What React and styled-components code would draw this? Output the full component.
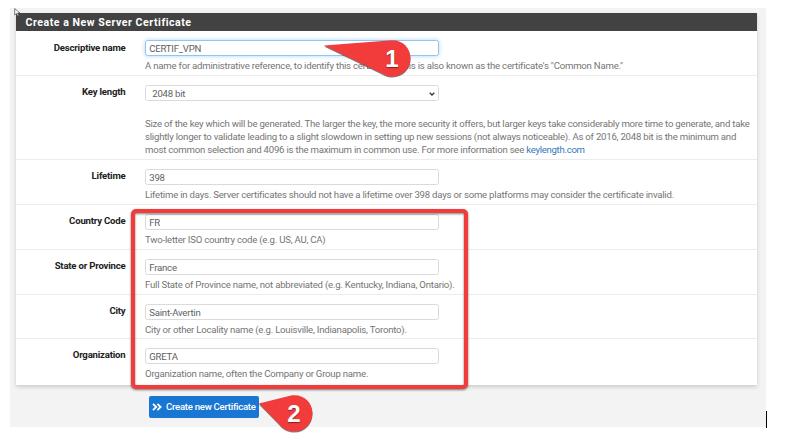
import React from "react";
import styled, { createGlobalStyle } from "styled-components";

const GlobalStyle = createGlobalStyle`
  * { box-sizing: border-box; }
  body {
    margin: 0;
    background: #fff;
    font-family: Roboto, "Liberation Sans", sans-serif;
    font-size: 9.6px;
    color: #757575;
  }
`;

const Screen = styled.main`
  position: relative;
  width: 788px;
  height: 437px;
  padding: 8px 0 0 10px;
  overflow: hidden;
`;

const Page = styled.div`
  width: 756px;
  height: 419px;
  padding: 4.5px 9px 0 6px;
  background: #f3f3f3;
`;

const Panel = styled.section`
  height: 372px;
  background: #fff;
  box-shadow: 0 2px 4px rgba(0, 0, 0, 0.16);
`;

const PanelTitle = styled.h2`
  margin: 0;
  height: 18.5px;
  padding-left: 9.5px;
  background: #424242;
  color: #fff;
  font-size: 10.6px;
  font-weight: 700;
  line-height: 19px;
  letter-spacing: 0.52px;
`;

const Row = styled.div`
  display: grid;
  grid-template-columns: 109.5px 1fr;
  column-gap: 19.5px;
  height: ${(p) => p.$height || 44.8}px;
  padding-top: 9px;
  border-bottom: ${(p) => (p.$last ? "0" : "1px solid #ececec")};
`;

const Label = styled.label`
  color: #212121;
  font-size: 9.6px;
  font-weight: 700;
  text-align: right;
  line-height: 13px;
  letter-spacing: -0.2px;
  padding-top: ${(p) => p.$drop || 0}px;
`;

const Field = styled.div`
  min-width: 0;
`;

const Control = styled.div`
  display: flex;
  align-items: center;
  justify-content: space-between;
  width: 294px;
  height: 16px;
  padding: 1px 3px 0 ${(p) => (p.$select ? 6.3 : 3.3)}px;
  border: 1px solid ${(p) => (p.$focus ? "#8ec6f4" : "#dadada")};
  border-radius: 2.5px;
  background: #fff;
  box-shadow: ${(p) => (p.$focus ? "0 0 4px rgba(102, 175, 233, 0.55)" : "none")};
  color: #616161;
  letter-spacing: -0.24px;
`;

const Help = styled.p`
  margin: ${(p) => (p.$gap ? 15.5 : 3)}px 0 0;
  line-height: 13.1px;
  letter-spacing: -0.217px;
  white-space: nowrap;
`;

const Line = styled.span`
  display: block;
`;

const Link = styled.a`
  color: #337ab7;
  letter-spacing: -0.3px;
`;

const SubmitButton = styled.button`
  display: flex;
  align-items: center;
  gap: 4px;
  width: 110.5px;
  height: 22px;
  margin: 11px 0 0 132.5px;
  padding: 0 0 0 3.5px;
  border: 0;
  border-radius: 2px;
  background: #1976d2;
  color: #fff;
  font: 500 9.6px Roboto, sans-serif;
  letter-spacing: -0.27px;
  white-space: nowrap;
`;

const Highlight = styled.div`
  position: absolute;
  left: 131px;
  top: 209px;
  width: 337px;
  height: 180px;
  border: 4px solid #f23b3b;
  border-radius: 5px;
  filter: drop-shadow(0 1px 1px rgba(0, 0, 0, 0.5));
`;

const Callout = styled.div`
  position: absolute;
  left: ${(p) => p.$x}px;
  top: ${(p) => p.$y}px;
  width: ${(p) => p.$w}px;
  height: 37px;
`;

const CalloutShape = styled.svg`
  display: block;
  width: 100%;
  height: 100%;
  overflow: visible;
  filter: drop-shadow(0 1px 0.7px rgba(0, 0, 0, 0.5));
`;

const CalloutNumber = styled.span`
  position: absolute;
  right: 1px;
  top: 0;
  width: 36px;
  color: #fff;
  font: 700 24px/37px "Liberation Sans", sans-serif;
  text-align: center;
  text-shadow: 0 1px 1px rgba(0, 0, 0, 0.45);
`;

const Pointer = styled.svg`
  position: absolute;
  left: 14px;
  top: 8px;
`;

const Caret = styled.div`
  position: absolute;
  left: 766px;
  top: 411px;
  width: 1px;
  height: 17px;
  background: #000;
`;

const identityFields = [
  { label: "Country Code", value: "FR", help: "Two-letter ISO country code (e.g. US, AU, CA)" },
  { label: "State or Province", value: "France", help: "Full State of Province name, not abbreviated (e.g. Kentucky, Indiana, Ontario)." },
  { label: "City", value: "Saint-Avertin", help: "City or other Locality name (e.g. Louisville, Indianapolis, Toronto)." },
  { label: "Organization", value: "GRETA", help: "Organization name, often the Company or Group name." },
];

export default function App() {
  return (
    <Screen>
      <GlobalStyle />
      <Page>
        <Panel>
          <PanelTitle>Create a New Server Certificate</PanelTitle>
          <Row $height={45}>
            <Label $drop={1}>Descriptive name</Label>
            <Field>
              <Control $focus>CERTIF_VPN</Control>
              <Help>
                <Line>A name for administrative reference, to identify this certificate. This is also known as the certificate's "Common Name."</Line>
              </Help>
            </Field>
          </Row>
          <Row $height={84}>
            <Label>Key length</Label>
            <Field>
              <Control $select>
                2048 bit
                <svg width="6" height="4" viewBox="0 0 6 4">
                  <path d="M.7.7 3 3 5.3.7" fill="none" stroke="#333" strokeWidth="1.3" />
                </svg>
              </Control>
              <Help $gap>
                <Line>Size of the key which will be generated. The larger the key, the more security it offers, but larger keys take considerably more time to generate, and take</Line>
                <Line>slightly longer to validate leading to a slight slowdown in setting up new sessions (not always noticeable). As of 2016, 2048 bit is the minimum and</Line>
                <Line>most common selection and 4096 is the maximum in common use. For more information see <Link>keylength.com</Link></Line>
              </Help>
            </Field>
          </Row>
          <Row $height={45}>
            <Label>Lifetime</Label>
            <Field>
              <Control>398</Control>
              <Help>
                <Line>Lifetime in days. Server certificates should not have a lifetime over 398 days or some platforms may consider the certificate invalid.</Line>
              </Help>
            </Field>
          </Row>
          {identityFields.map((f, i) => (
            <Row key={f.label} $last={i === identityFields.length - 1}>
              <Label>{f.label}</Label>
              <Field>
                <Control>{f.value}</Control>
                <Help><Line>{f.help}</Line></Help>
              </Field>
            </Row>
          ))}
        </Panel>
        <SubmitButton>
          <svg width="10" height="8" viewBox="0 0 10 8">
            <path d="M1 .8 4.2 4 1 7.2M5.4.8 8.6 4 5.4 7.2" fill="none" stroke="#fff" strokeWidth="1.8" />
          </svg>
          Create new Certificate
        </SubmitButton>
      </Page>
      <Highlight />
      <Callout $x={324} $y={40} $w={87}>
        <CalloutShape viewBox="0 0 87 37">
          <path d="M0 5.5 68 .2C79 0 86.500 8 86.500 18.300 86.500 28.500 78.500 36.500 68.500 36.500 65 36.500 61.500 35.500 59 33.900Z" fill="#f23b3b" />
        </CalloutShape>
        <CalloutNumber>1</CalloutNumber>
      </Callout>
      <Callout $x={259} $y={395} $w={54}>
        <CalloutShape viewBox="0 0 54 37">
          <path d="M0 8.500 32 .5C44-1.500 53.500 7 53.500 18.200 53.500 28.500 45.500 36.500 35.500 36.500 29 36.500 24 34 21 30Z" fill="#f23b3b" />
        </CalloutShape>
        <CalloutNumber>2</CalloutNumber>
      </Callout>
      <Pointer width="7" height="9" viewBox="0 0 7 9">
        <path d="M.7.6V7l1.700-1.500L3.600 8l1.200-.6-1.200-2.300H6Z" fill="#fff" stroke="#444" strokeWidth=".7" />
      </Pointer>
      <Caret />
    </Screen>
  );
}
